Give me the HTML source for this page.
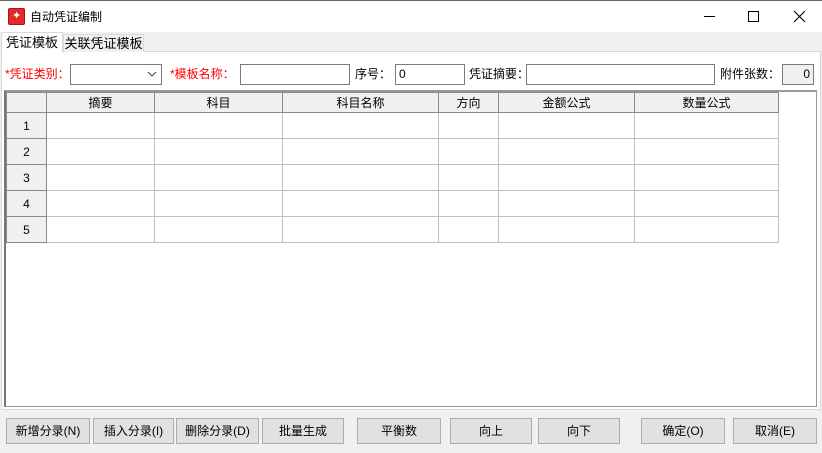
<!DOCTYPE html>
<html><head><meta charset="utf-8"><style>
*{box-sizing:border-box;margin:0;padding:0}
body{width:822px;height:453px;position:relative;background:#f0f0f0;font-family:"Liberation Sans","Noto Sans CJK SC",sans-serif;font-size:12px;color:#000;overflow:hidden}
.a{position:absolute}
.title{left:0;top:0;width:822px;height:32px;background:#fff;border-top:1px solid #666}
.inp{position:absolute;background:#fff;border:1px solid #7a7a7a;height:21px;font-size:12px;line-height:19px;padding-left:3px}
.lbl{position:absolute;top:66px;font-size:12px;line-height:16px}
.red{color:#f00}
.btn{position:absolute;top:418px;height:26px;background:#e1e1e1;border:1px solid #adadad;text-align:center;line-height:24px;font-size:12px}
table{border-collapse:collapse;position:absolute;left:6px;top:92px}
td{border:1px solid #c0c0c0;height:26px;padding:0;text-align:center;font-size:12px}
th{border:1px solid #8a8a8a;background:#f0f0f0;height:20px;padding:0;font-weight:normal;font-size:12px;line-height:16px}
td.rh{background:#f0f0f0;border:1px solid #8a8a8a}
</style></head><body>
<div class="a title">
  <div class="a" style="left:8px;top:7px;width:17px;height:17px;background:#e02b2b;border-radius:2px;border:1px solid #b01010"></div>
  <div class="a" style="left:12px;top:11px;width:9px;height:9px;color:#fff;font-size:11px;line-height:9px;text-align:center">✦</div>
  <div class="a" style="left:30px;top:7px;font-size:12px">自动凭证编制</div>
  <div class="a" style="left:704px;top:15px;width:11px;height:1px;background:#000"></div>
  <div class="a" style="left:748px;top:10px;width:11px;height:11px;border:1px solid #000"></div>
  <svg class="a" style="left:793px;top:9px" width="13" height="13"><path d="M1 1L12 12M12 1L1 12" stroke="#000" stroke-width="1.1"/></svg>
</div>
<div class="a" style="left:1px;top:51px;width:820px;height:359px;background:#fff;border:1px solid #d9d9d9"></div>
<div class="a" style="left:1px;top:32px;width:62px;height:21px;background:#fff;border:1px solid #d9d9d9;border-bottom:none;text-align:center;line-height:20px;font-size:13px">凭证模板</div>
<div class="a" style="left:63px;top:34px;width:81px;height:18px;background:#f0f0f0;border:1px solid #d9d9d9;border-bottom:none;text-align:center;line-height:18px;font-size:13px">关联凭证模板</div>

<div class="lbl red" style="left:5px">*凭证类别：</div>
<div class="inp" style="left:70px;top:64px;width:92px"></div>
<svg class="a" style="left:147px;top:71px" width="10" height="6"><path d="M1 1L5 5L9 1" stroke="#444" fill="none"/></svg>
<div class="lbl red" style="left:170px">*模板名称：</div>
<div class="inp" style="left:240px;top:64px;width:110px"></div>
<div class="lbl" style="left:355px">序号：</div>
<div class="inp" style="left:395px;top:64px;width:70px">0</div>
<div class="lbl" style="left:469px">凭证摘要：</div>
<div class="inp" style="left:526px;top:64px;width:189px"></div>
<div class="lbl" style="left:720px">附件张数：</div>
<div class="inp" style="left:782px;top:64px;width:32px;background:#f0f0f0;text-align:right;padding-right:3px">0</div>

<div class="a" style="left:4px;top:90px;width:813px;height:317px;background:#fff;border:1px solid #999;border-left:2px solid #777;border-top:2px solid #999"></div>
<table>
<tr><th style="width:40px"></th><th style="width:108px">摘要</th><th style="width:128px">科目</th><th style="width:156px">科目名称</th><th style="width:60px">方向</th><th style="width:136px">金额公式</th><th style="width:144px">数量公式</th></tr>
<tr><td class="rh">1</td><td></td><td></td><td></td><td></td><td></td><td></td></tr>
<tr><td class="rh">2</td><td></td><td></td><td></td><td></td><td></td><td></td></tr>
<tr><td class="rh">3</td><td></td><td></td><td></td><td></td><td></td><td></td></tr>
<tr><td class="rh">4</td><td></td><td></td><td></td><td></td><td></td><td></td></tr>
<tr><td class="rh">5</td><td></td><td></td><td></td><td></td><td></td><td></td></tr>
</table>

<div class="btn" style="left:6px;width:84px">新增分录(N)</div>
<div class="btn" style="left:93px;width:81px">插入分录(I)</div>
<div class="btn" style="left:176px;width:83px">删除分录(D)</div>
<div class="btn" style="left:262px;width:82px">批量生成</div>
<div class="btn" style="left:357px;width:84px">平衡数</div>
<div class="btn" style="left:450px;width:82px">向上</div>
<div class="btn" style="left:538px;width:82px">向下</div>
<div class="btn" style="left:641px;width:84px">确定(O)</div>
<div class="btn" style="left:733px;width:84px">取消(E)</div>
</body></html>
